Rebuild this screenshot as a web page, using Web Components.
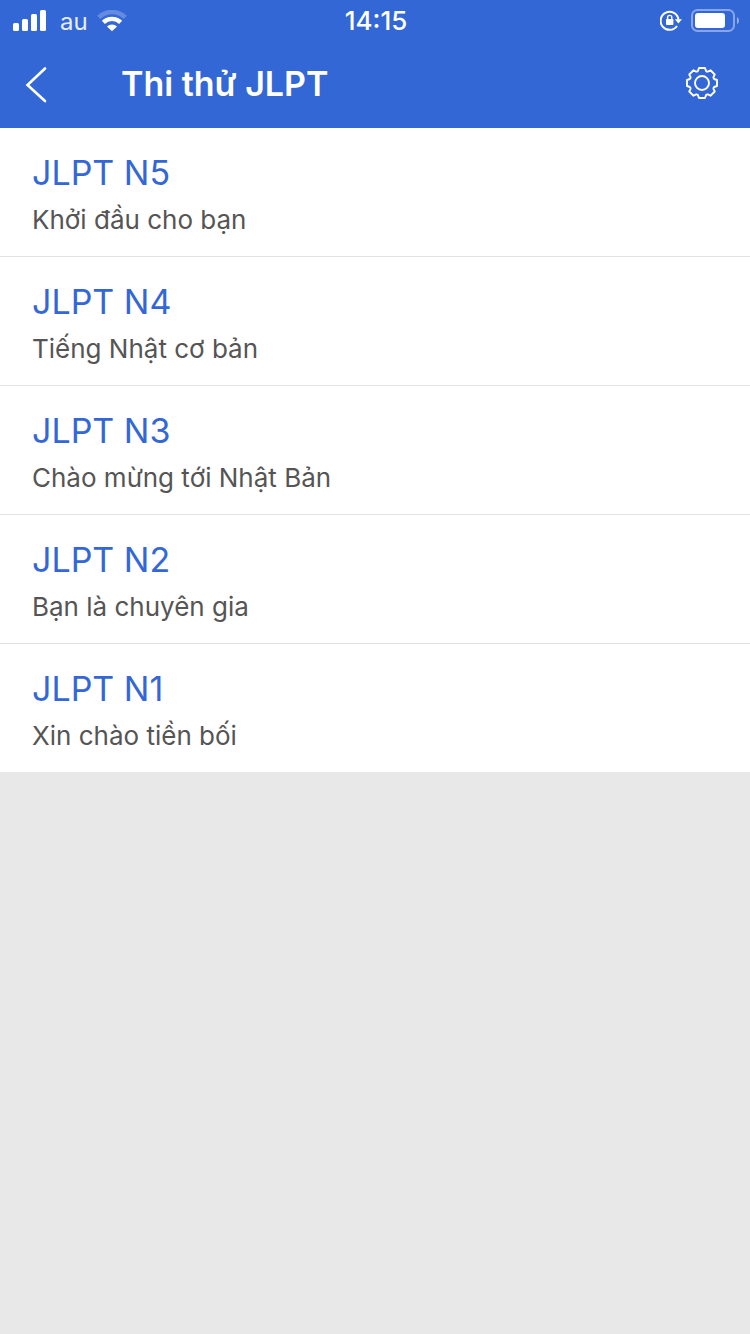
<!DOCTYPE html>
<html lang="vi">
<head>
<meta charset="utf-8">
<meta name="viewport" content="width=device-width, initial-scale=1">
<title>Thi thử JLPT</title>
<style>
  html { min-height: 100%; background: #e8e8e8; }
  body { margin: 0; font-family: Inter, "Liberation Sans", sans-serif; }
</style>
</head>
<body>
<exam-app></exam-app>

<template id="status-bar">
  <style>
    :host { display: grid; grid-template-columns: 1fr auto 1fr; align-items: center; height: 40px; padding: 0 11px 0 13px; color: #fff; font-size: 24px; line-height: 40px; }
    .left, .right { display: flex; align-items: center; }
    .right { justify-content: flex-end; gap: 9px; }
    .carrier { margin: 0 9px 0 14px; padding-top: 2px; color: #e6edfa; }
    .time { font-size: 26px; font-weight: 500; }
    svg { display: block; }
  </style>
  <div class="left">
    <svg width="33" height="24" viewBox="0 0 33 24" fill="#fff" aria-hidden="true">
      <rect x="0" y="14" width="6" height="8" rx="1.5"/><rect x="9" y="10" width="6" height="12" rx="1.5"/><rect x="18" y="5" width="6" height="17" rx="1.5"/><rect x="27" y="1" width="6" height="21" rx="1.5"/>
    </svg>
    <span class="carrier">au</span>
    <svg width="30" height="22" viewBox="0 0 30 22" aria-hidden="true">
      <path d="M1.800 7.300A19 19 0 0 1 28.200 7.300" fill="none" stroke="#fff" stroke-opacity=".24" stroke-width="4.400"/>
      <path d="M6.400 12.400A12.200 12.200 0 0 1 23.600 12.400" fill="none" stroke="#fff" stroke-width="4.400"/>
      <path d="M10 16.600a7 7 0 0 1 10 0L15 21.300z" fill="#fff"/>
    </svg>
  </div>
  <span class="time">14:15</span>
  <div class="right">
    <svg width="22" height="24" viewBox="0 0 22 24" fill="none" stroke="#fff" aria-hidden="true">
      <path d="M17 17A9 9 0 1 1 18.500 10.500" stroke-width="2"/>
      <path d="M14.800 10.200h7.200l-3.600 4.300z" fill="#fff" stroke="none"/>
      <rect x="6" y="10" width="7.400" height="6" rx=".8" fill="#fff" stroke="none"/>
      <path d="M7.600 11V8.500a2.100 2.100 0 0 1 4.200 0V11" stroke-width="1.400"/>
    </svg>
    <svg width="48" height="24" viewBox="0 0 48 24" aria-hidden="true">
      <rect x="1" y="1" width="42" height="21" rx="5.500" fill="none" stroke="#fff" stroke-opacity=".42" stroke-width="2"/>
      <rect x="4" y="4" width="30" height="15" rx="3" fill="#fff"/>
      <path d="M46 8q2 1 2 3.500t-2 3.500z" fill="#fff" fill-opacity=".5"/>
    </svg>
  </div>
</template>

<template id="nav-bar">
  <style>
    :host { display: flex; align-items: center; height: 88px; color: #fff; }
    h1 { flex: 1; margin: 0; padding-left: 49px; font-size: 34px; font-weight: 600; line-height: 44px; }
    button { display: grid; place-items: center; border: 0; margin: 0; padding: 0; background: none; color: inherit; height: 88px; width: 72px; }
    .settings { width: 96px; height: 86px; align-self: flex-start; }
    svg { display: block; }
  </style>
  <button class="back" type="button" aria-label="Quay lại">
    <svg width="24" height="38" viewBox="0 0 24 38" fill="none" stroke="#fff" stroke-width="2.600" stroke-linecap="round"><path d="M21 3.500L3.500 20L21 36"/></svg>
  </button>
  <h1><slot></slot></h1>
  <button class="settings" type="button" aria-label="Cài đặt">
    <svg width="34" height="34" viewBox="-17 -17 34 34" fill="none" stroke="#fff" stroke-width="1.900" stroke-linejoin="round">
      <circle r="7"/>
      <path d="M-3-15H3L4-12.200Q4.900-11.100 5.800-11.450L8.490-12.730L12.730-8.490L11.450-5.800Q11.100-4.900 12.200-4L15-3V3L12.200 4Q11.100 4.900 11.450 5.800L12.730 8.490L8.490 12.730L5.800 11.450Q4.900 11.100 4 12.200L3 15H-3L-4 12.200Q-4.900 11.100-5.800 11.450L-8.490 12.730L-12.730 8.490L-11.450 5.800Q-11.100 4.900-12.200 4L-15 3V-3L-12.200-4Q-11.100-4.900-11.450-5.800L-12.730-8.490L-8.490-12.730L-5.800-11.450Q-4.900-11.100-4-12.200Z"/>
    </svg>
  </button>
</template>

<template id="level-item">
  <style>
    :host { display: block; background: #fff; border-bottom: 1px solid #e2e2e2; }
    :host(:last-of-type) { border-bottom: 0; }
    a { display: flex; flex-direction: column; gap: 10px; padding: 24px 32px 20px; color: inherit; text-decoration: none; }
    .name { color: #3367d6; font-size: 34px; line-height: 42px; }
    .note { color: #555; font-size: 26px; line-height: 32px; }
  </style>
  <a href="#"><span class="name"><slot name="name"></slot></span><span class="note"><slot></slot></span></a>
</template>

<template id="exam-app">
  <style>
    :host { display: block; }
    header { background: #3367d6; }
  </style>
  <header>
    <status-bar></status-bar>
    <nav-bar>Thi thử JLPT</nav-bar>
  </header>
  <main>
    <level-item><span slot="name">JLPT N5</span>Khởi đầu cho bạn</level-item>
    <level-item><span slot="name">JLPT N4</span>Tiếng Nhật cơ bản</level-item>
    <level-item><span slot="name">JLPT N3</span>Chào mừng tới Nhật Bản</level-item>
    <level-item><span slot="name">JLPT N2</span>Bạn là chuyên gia</level-item>
    <level-item><span slot="name">JLPT N1</span>Xin chào tiền bối</level-item>
  </main>
</template>

<script>
  class TemplateElement extends HTMLElement {
    constructor() {
      super();
      const template = document.getElementById(this.localName);
      this.attachShadow({ mode: "open" }).append(template.content.cloneNode(true));
    }
  }
  customElements.define("status-bar", class StatusBar extends TemplateElement {});
  customElements.define("nav-bar", class NavBar extends TemplateElement {});
  customElements.define("level-item", class LevelItem extends TemplateElement {});
  customElements.define("exam-app", class ExamApp extends TemplateElement {});
</script>
</body>
</html>
